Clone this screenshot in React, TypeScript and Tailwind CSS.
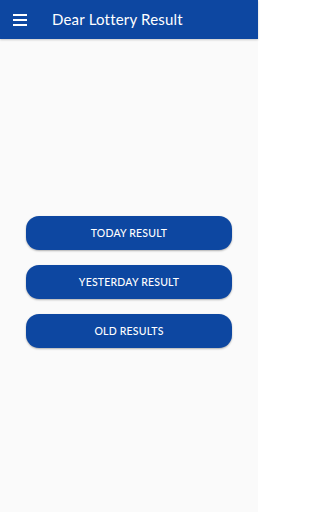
export default function App() {
  const buttons = ["TODAY RESULT", "YESTERDAY RESULT", "OLD RESULTS"];
  return (
    <div className="w-[258px] h-[512px] bg-[#fafafa] flex flex-col" style={{ fontFamily: "Lato, 'Open Sans', sans-serif" }}>
      <div className="h-[39px] bg-[#0d47a1] flex items-center shrink-0 shadow-[0_1px_2px_rgba(0,0,0,0.2)]">
        <div className="ml-[13px] w-[14px] flex flex-col gap-[3px]">
          <div className="h-[2px] bg-white" />
          <div className="h-[2px] bg-white" />
          <div className="h-[2px] bg-white" />
        </div>
        <div className="ml-[25px] text-white text-[15px] tracking-[0.2px]">Dear Lottery Result</div>
      </div>
      <div className="flex flex-col gap-[15px] px-[26px] pt-[177px]">
        {buttons.map((b) => (
          <button
            key={b}
            className="h-[34px] w-full rounded-[13px] bg-[#0d47a1] text-white text-[10.5px] font-medium tracking-[0.2px] pt-[1px] shadow-[0_1px_2px_rgba(0,0,0,0.3)]"
          >
            {b}
          </button>
        ))}
      </div>
    </div>
  );
}
